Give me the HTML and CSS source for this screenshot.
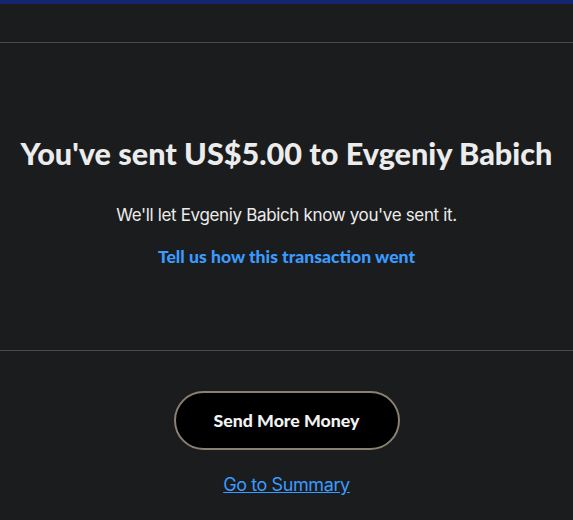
FILE: index.html
```
<!DOCTYPE html>
<html lang="en">
<head>
<meta charset="utf-8">
<title>Sent</title>
<link rel="stylesheet" href="styles.css">
</head>
<body>
<div class="topbar"></div>
<header class="header"></header>
<main class="result">
  <h1 class="title">You've sent US$5.00 to Evgeniy Babich</h1>
  <p class="note">We'll let Evgeniy Babich know you've sent it.</p>
  <a class="feedback" href="#">Tell us how this transaction went</a>
</main>
<footer class="actions">
  <button class="primary" type="button">Send More Money</button>
  <a class="summary" href="#">Go to Summary</a>
</footer>
</body>
</html>
```
FILE: styles.css
```
html, body {
  margin: 0;
  padding: 0;
  background: #1b1c1e;
  color: #ececec;
  font-family: Inter, "Liberation Sans", sans-serif;
}
.topbar {
  height: 4px;
  background: #142570;
}
.header {
  height: 38px;
  border-bottom: 1px solid #4a4b4d;
}
.result {
  height: 308px;
  border-bottom: 1px solid #4a4b4d;
  display: flex;
  flex-direction: column;
  align-items: center;
  padding-top: 91px;
  box-sizing: border-box;
}
.title {
  margin: 0;
  font-family: Lato, sans-serif;
  font-weight: 900;
  font-size: 30.6px;
  line-height: 40px;
  color: #ececec;
}
.note {
  margin: 29px 0 0;
  font-size: 17px;
  line-height: 24px;
  letter-spacing: -0.35px;
}
.feedback {
  margin-top: 19px;
  font-family: Lato, sans-serif;
  font-weight: 900;
  font-size: 17.6px;
  color: #3a9bff;
  text-decoration: none;
}
.actions {
  display: flex;
  flex-direction: column;
  align-items: center;
  padding-top: 40px;
}
.primary {
  width: 226px;
  height: 59px;
  border-radius: 30px;
  border: 2px solid #8a8070;
  background: #000;
  color: #f2f2f2;
  font-family: Lato, sans-serif;
  font-weight: 900;
  font-size: 17.7px;
}
.summary {
  margin-top: 24px;
  font-size: 18px;
  color: #3a9bff;
  letter-spacing: -0.4px;
}
```
